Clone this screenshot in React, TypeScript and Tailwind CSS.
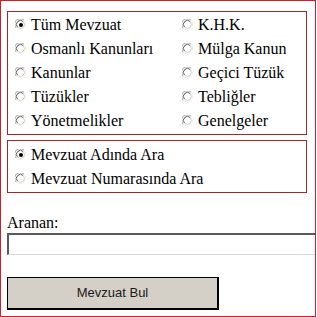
import React, { useState } from 'react';

const Radio: React.FC<{ checked?: boolean }> = ({ checked }) => (
  <svg width="12" height="12" viewBox="0 0 12 12" className="shrink-0">
    <circle cx="6" cy="6" r="5.5" fill="#ffffff" />
    <path d="M1.2 9 A5.3 5.3 0 0 1 9 1.2" fill="none" stroke="#9a9a9a" strokeWidth="1" />
    <path d="M2.6 8.2 A3.9 3.9 0 0 1 8.2 2.6" fill="none" stroke="#555555" strokeWidth="1" />
    <path d="M9 1.2 A5.3 5.3 0 0 1 1.2 9" fill="none" stroke="#f0f0f0" strokeWidth="1" />
    <path d="M8.2 2.6 A3.9 3.9 0 0 1 2.6 8.2" fill="none" stroke="#d4d0c8" strokeWidth="1" />
    {checked && <circle cx="6" cy="6" r="2" fill="#000000" />}
  </svg>
);

const Option: React.FC<{ label: string; checked?: boolean; onClick: () => void }> = ({ label, checked, onClick }) => (
  <label onClick={onClick} className="flex items-center h-[24px] cursor-default whitespace-nowrap">
    <Radio checked={checked} />
    <span className="ml-[4px]">{label}</span>
  </label>
);

const leftTypes = ['Tüm Mevzuat', 'Osmanlı Kanunları', 'Kanunlar', 'Tüzükler', 'Yönetmelikler'];
const rightTypes = ['K.H.K.', 'Mülga Kanun', 'Geçici Tüzük', 'Tebliğler', 'Genelgeler'];

export default function App() {
  const [type, setType] = useState('Tüm Mevzuat');
  const [mode, setMode] = useState('ad');
  const [query, setQuery] = useState('');

  return (
    <div className="w-[316px] h-[317px] border border-[#c4242c] bg-white overflow-hidden text-black text-[16px] leading-[18px] font-['Liberation_Serif','Times_New_Roman',serif]">
      <div className="pl-[6px] pt-[10px]">
        {/* Mevzuat türü */}
        <div className="w-[300px] border border-[#9b2b2f] pl-[7px] py-[1px] grid grid-cols-[167px_1fr]">
          <div>
            {leftTypes.map((t) => (
              <Option key={t} label={t} checked={type === t} onClick={() => setType(t)} />
            ))}
          </div>
          <div>
            {rightTypes.map((t) => (
              <Option key={t} label={t} checked={type === t} onClick={() => setType(t)} />
            ))}
          </div>
        </div>

        {/* Arama şekli */}
        <div className="w-[300px] mt-[5px] border border-[#9b2b2f] pl-[7px] pt-[2px] pb-[1px]">
          <Option label="Mevzuat Adında Ara" checked={mode === 'ad'} onClick={() => setMode('ad')} />
          <Option label="Mevzuat Numarasında Ara" checked={mode === 'no'} onClick={() => setMode('no')} />
        </div>

        <div className="mt-[21px]">Aranan:</div>
        <input
          type="text"
          value={query}
          onChange={(e) => setQuery(e.target.value)}
          className="block w-[320px] h-[22px] mt-[1px] border-t-2 border-l-2 border-t-[#5a5a5a] border-l-[#5a5a5a] border-b border-r border-b-[#d8d8d8] border-r-[#d8d8d8] bg-white outline-none px-1"
        />

        <button className="mt-[22px] w-[212px] h-[33px] bg-[#d4d0c8] border border-black border-b-2 border-r-2 text-[13px] text-[#1a1a1a] font-['Liberation_Sans',Arial,sans-serif]">
          Mevzuat Bul
        </button>
      </div>
    </div>
  );
}
